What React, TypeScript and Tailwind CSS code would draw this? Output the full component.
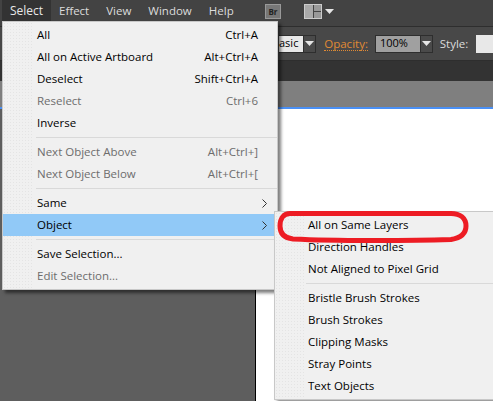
import React from "react";

type Row = { t: string; s?: string; d?: boolean; arrow?: boolean; hi?: boolean } | "sep";

const mainRows: Row[] = [
  { t: "All", s: "Ctrl+A" },
  { t: "All on Active Artboard", s: "Alt+Ctrl+A" },
  { t: "Deselect", s: "Shift+Ctrl+A" },
  { t: "Reselect", s: "Ctrl+6", d: true },
  { t: "Inverse" },
  "sep",
  { t: "Next Object Above", s: "Alt+Ctrl+]", d: true },
  { t: "Next Object Below", s: "Alt+Ctrl+[", d: true },
  "sep",
  { t: "Same", arrow: true },
  { t: "Object", arrow: true, hi: true },
  "sep",
  { t: "Save Selection..." },
  { t: "Edit Selection...", d: true },
];

const subRows: Row[] = [
  { t: "All on Same Layers" },
  { t: "Direction Handles" },
  { t: "Not Aligned to Pixel Grid" },
  "sep",
  { t: "Bristle Brush Strokes" },
  { t: "Brush Strokes" },
  { t: "Clipping Masks" },
  { t: "Stray Points" },
  { t: "Text Objects" },
];

function Caret() {
  return (
    <svg width="9" height="5" viewBox="0 0 9 5" className="shrink-0">
      <path d="M0 0H9L4.5 5Z" fill="#e6e6e6" />
    </svg>
  );
}

function Menu({ rows, className, indent, textPad }: { rows: Row[]; className: string; indent: string; textPad: string }) {
  return (
    <div className={className}>
      <div className="absolute left-0 top-0 bottom-0 w-[30px] bg-[radial-gradient(#e4e4e4_1px,transparent_1px)] bg-[length:3px_3px]" />
      {rows.map((r, i) =>
        r === "sep" ? (
          <div key={i} className={`relative h-[7px] flex items-center ${indent}`}>
            <div className="h-px w-full bg-[#d9d9d9]" />
          </div>
        ) : (
          <div
            key={i}
            className={`relative h-[22px] flex items-center justify-between pr-[11px] ${r.hi ? "bg-[#91c9f7]" : ""} ${r.d ? "text-[#6d6d6d]" : "text-black"}`}
          >
            <span className={textPad}>{r.t}</span>
            {r.s && <span className="pr-[8px]">{r.s}</span>}
            {r.arrow && (
              <svg width="5" height="9" viewBox="0 0 5 9" className="mr-[-1px]">
                <path d="M0.5 0.5L4.5 4.5L0.5 8.5" fill="none" stroke="#333" strokeWidth="1" />
              </svg>
            )}
          </div>
        )
      )}
    </div>
  );
}

export default function App() {
  return (
    <div
      className="relative w-[493px] h-[401px] overflow-hidden bg-[#5e5e5e] text-[11.5px] flex flex-col"
      style={{ fontFamily: '"Open Sans", "Noto Sans", sans-serif' }}
    >
      {/* top menu bar */}
      <div className="h-[27px] bg-[#434343] border-b border-[#2e2e2e] flex items-start text-[#dcdcdc] text-[12px] shrink-0">
        <div className="h-[21px] w-[49px] ml-[2px] flex items-center justify-center bg-[#333333] text-[#e8e8e8]">Select</div>
        <div className="h-[21px] w-[191px] flex items-center pl-[8px] gap-[17px] text-[11.5px]">
          <span>Effect</span>
          <span>View</span>
          <span>Window</span>
          <span>Help</span>
        </div>
        <div className="ml-[23px] mt-[4px] w-[16px] h-[15px] bg-[#777] border border-[#999] flex items-center justify-center text-[8px] font-bold text-[#222]">Br</div>
        <div className="ml-[23px] mt-[4px] w-[18px] h-[15px] border border-[#ccc] bg-[#444] grid grid-cols-2 grid-rows-2 gap-px">
          <div className="row-span-2 bg-[#aaa]" />
          <div className="bg-[#999]" />
          <div className="bg-[#999]" />
        </div>
        <div className="ml-[3px] mt-[9px]"><Caret /></div>
      </div>

      {/* control bar */}
      <div className="h-[34px] bg-[#484848] border-b border-[#2e2e2e] flex items-center pl-[279px] shrink-0">
        <div className="w-[26px] h-[18px] bg-[#e8e8e8] text-black text-[11px] flex items-center justify-end pr-[5px] border-y border-[#2e2e2e]">
          asic
        </div>
        <div className="w-[15px] h-[18px] bg-[#4a4a4a] border border-[#2e2e2e] flex items-center justify-center"><Caret /></div>
        <span className="ml-[8px] text-[#e08a35] border-b border-dotted border-[#e08a35] leading-[13px]">Opacity:</span>
        <div className="ml-[7px] w-[53px] h-[18px] bg-[#a0a0a0] border-y border-l border-[#2e2e2e] text-black text-[11px] flex items-center pl-[4px]">100%</div>
        <div className="w-[15px] h-[18px] bg-[#4a4a4a] border border-[#2e2e2e] flex items-center justify-center"><Caret /></div>
        <span className="ml-[7px] text-[#dcdcdc]">Style:</span>
        <div className="ml-[8px] w-[20px] h-[18px] bg-[#e8e8e8]" />
      </div>

      {/* tab strip */}
      <div className="h-[20px] bg-[#333333] shrink-0" />
      {/* pasteboard top */}
      <div className="h-[26px] bg-[#7f7f7f] shrink-0" />
      <div className="h-[2px] bg-[#4a90f5] shrink-0" />
      {/* document */}
      <div className="flex-1 flex min-h-0">
        <div className="w-[255px] bg-[#5e5e5e] border-r border-black box-content" />
        <div className="flex-1 bg-white" />
      </div>

      {/* Select menu */}
      <Menu
        rows={mainRows}
        indent="pl-[33px]"
        textPad="pl-[34px]"
        className="absolute left-[2px] top-[21px] w-[276px] h-[269px] pt-[2px] bg-[#f0f0f0] border border-[#c8c8c8] shadow-[3px_3px_3px_rgba(0,0,0,0.5)]"
      />
      {/* Object submenu */}
      <Menu
        rows={subRows}
        indent="pl-[31px]"
        textPad="pl-[33px]"
        className="absolute left-[274px] top-[211px] w-[222px] h-[189px] pt-[2px] bg-[#f0f0f0] border border-[#c8c8c8] shadow-[3px_3px_3px_rgba(0,0,0,0.4)]"
      />

      {/* hand-drawn red mark */}
      <svg width="196" height="36" viewBox="0 0 196 36" className="absolute left-[275px] top-[208px]">
        <path
          d="M15 5.5H176C185 5.5 191 10 191 18C191 26 185 30 176 31.5C130 33 60 33 18 31C9 30 5 25 5 18C5 10 9 5.5 15 5.5Z"
          fill="none"
          stroke="#ed1c24"
          strokeWidth="5"
        />
      </svg>
    </div>
  );
}
